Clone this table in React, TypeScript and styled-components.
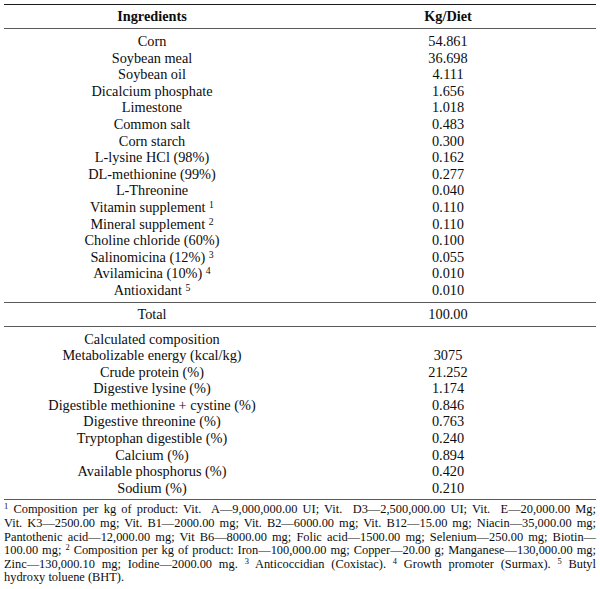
import React from 'react'
import styled, { createGlobalStyle } from 'styled-components'

const GlobalStyle = createGlobalStyle`
  html, body {
    margin: 0;
    padding: 0;
    background: #ffffff;
  }
`

type Row = { name: string; value: string; note?: number }

const ingredients: Row[] = [
  { name: 'Corn', value: '54.861' },
  { name: 'Soybean meal', value: '36.698' },
  { name: 'Soybean oil', value: '4.111' },
  { name: 'Dicalcium phosphate', value: '1.656' },
  { name: 'Limestone', value: '1.018' },
  { name: 'Common salt', value: '0.483' },
  { name: 'Corn starch', value: '0.300' },
  { name: 'L-lysine HCl (98%)', value: '0.162' },
  { name: 'DL-methionine (99%)', value: '0.277' },
  { name: 'L-Threonine', value: '0.040' },
  { name: 'Vitamin supplement', value: '0.110', note: 1 },
  { name: 'Mineral supplement', value: '0.110', note: 2 },
  { name: 'Choline chloride (60%)', value: '0.100' },
  { name: 'Salinomicina (12%)', value: '0.055', note: 3 },
  { name: 'Avilamicina (10%)', value: '0.010', note: 4 },
  { name: 'Antioxidant', value: '0.010', note: 5 },
]

const composition: Row[] = [
  { name: 'Calculated composition', value: '' },
  { name: 'Metabolizable energy (kcal/kg)', value: '3075' },
  { name: 'Crude protein (%)', value: '21.252' },
  { name: 'Digestive lysine (%)', value: '1.174' },
  { name: 'Digestible methionine + cystine (%)', value: '0.846' },
  { name: 'Digestive threonine (%)', value: '0.763' },
  { name: 'Tryptophan digestible (%)', value: '0.240' },
  { name: 'Calcium (%)', value: '0.894' },
  { name: 'Available phosphorus (%)', value: '0.420' },
  { name: 'Sodium (%)', value: '0.210' },
]

const footnoteLines: React.ReactNode[] = [
  <>
    <Sup>1</Sup> Composition per kg of product: Vit.&nbsp; A—9,000,000.00 UI; Vit.&nbsp; D3—2,500,000.00 UI; Vit.&nbsp; E—20,000.00 Mg;
  </>,
  <>Vit. K3—2500.00 mg; Vit. B1—2000.00 mg; Vit. B2—6000.00 mg; Vit. B12—15.00 mg; Niacin—35,000.00 mg;</>,
  <>Pantothenic acid—12,000.00 mg; Vit B6—8000.00 mg; Folic acid—1500.00 mg; Selenium—250.00 mg; Biotin—</>,
  <>
    100.00 mg; <Sup>2</Sup> Composition per kg of product: Iron—100,000.00 mg; Copper—20.00 g; Manganese—130,000.00 mg;
  </>,
  <>
    Zinc—130,000.10 mg; Iodine—2000.00 mg. <Sup>3</Sup> Anticoccidian (Coxistac). <Sup>4</Sup> Growth promoter (Surmax). <Sup>5</Sup> Butyl
  </>,
  <>hydroxy toluene (BHT).</>,
]

function Sup({ children }: { children: React.ReactNode }) {
  return <SupText>{children}</SupText>
}

const App = () => {
  return (
    <>
      <GlobalStyle />
      <Page>
        <Table>
          <colgroup>
            <col style={{ width: '50%' }} />
            <col style={{ width: '50%' }} />
          </colgroup>
          <thead>
            <tr>
              <HeadCell>Ingredients</HeadCell>
              <HeadCell>Kg/Diet</HeadCell>
            </tr>
          </thead>
          <Group>
            {ingredients.map(row => (
              <tr key={row.name}>
                <Cell>
                  {row.name}
                  {row.note && (
                    <>
                      {' '}
                      <Sup>{row.note}</Sup>
                    </>
                  )}
                </Cell>
                <Cell>{row.value}</Cell>
              </tr>
            ))}
          </Group>
          <TotalGroup>
            <tr>
              <TotalCell>Total</TotalCell>
              <TotalCell>100.00</TotalCell>
            </tr>
          </TotalGroup>
          <Group>
            {composition.map(row => (
              <tr key={row.name}>
                <Cell>{row.name}</Cell>
                <Cell>{row.value}</Cell>
              </tr>
            ))}
          </Group>
        </Table>
        <Footnote>
          {footnoteLines.map((line, i) => (
            <FootLine key={i} $last={i === footnoteLines.length - 1}>
              {line}
            </FootLine>
          ))}
        </Footnote>
      </Page>
    </>
  )
}

const Page = styled.div`
  width: 592px;
  margin: 0 4px;
  padding-top: 4px;
  font-family: 'Liberation Serif', 'Times New Roman', serif;
  color: #0d0d0d;
`

const Table = styled.table`
  width: 100%;
  border-collapse: collapse;
  table-layout: fixed;
  border-top: 1.5px solid #1a1a1a;
  border-bottom: 1px solid #5a5a5a;
`

const HeadCell = styled.th`
  height: 23px;
  padding: 0;
  font-size: 14.3px;
  font-weight: bold;
  text-align: center;
  border-bottom: 1px solid #5a5a5a;
`

const Group = styled.tbody`
  tr:first-child td {
    padding-top: 4px;
  }
  tr:last-child td {
    padding-bottom: 3px;
  }
`

const TotalGroup = styled.tbody`
  border-top: 1px solid #5a5a5a;
  border-bottom: 1px solid #5a5a5a;
`

const Cell = styled.td`
  padding: 0;
  font-size: 14.3px;
  line-height: 16.6px;
  text-align: center;
  white-space: nowrap;
`

const TotalCell = styled(Cell)`
  height: 23px;
`

const SupText = styled.sup`
  font-size: 0.68em;
  line-height: 0;
  vertical-align: 0.45em;
`

const Footnote = styled.div`
  padding-top: 3px;
  font-size: 12.4px;
  line-height: 13.6px;
`

const FootLine = styled.div<{ $last: boolean }>`
  text-align: ${({ $last }) => ($last ? 'left' : 'justify')};
  text-align-last: ${({ $last }) => ($last ? 'left' : 'justify')};
  white-space: nowrap;
`

export default App
